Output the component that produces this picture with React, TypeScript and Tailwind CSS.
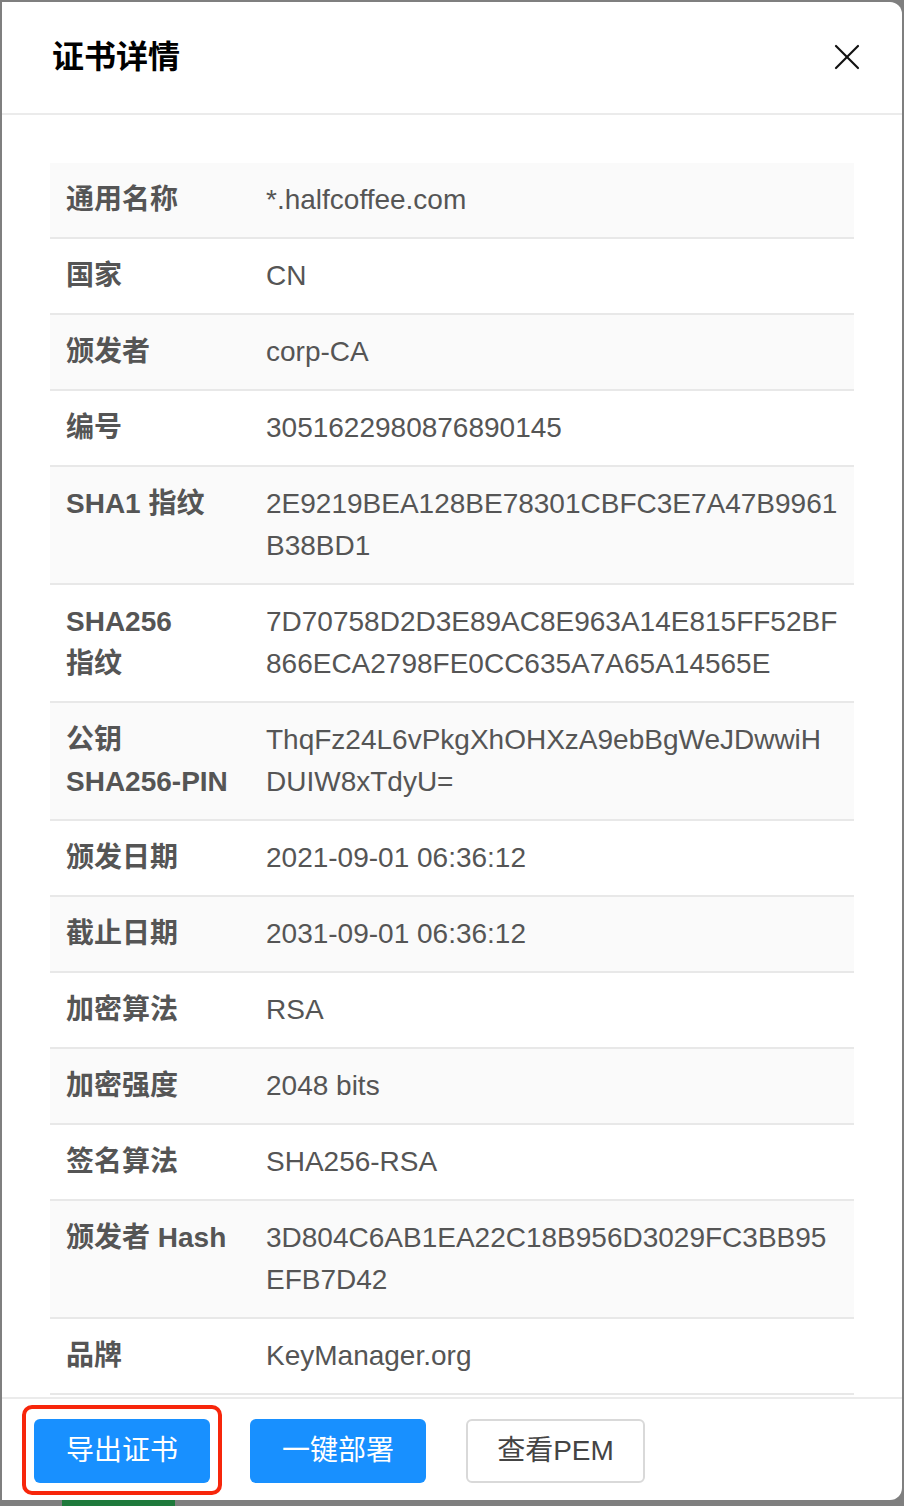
const rows: { label: string[]; value: string[] }[] = [
  { label: ["通用名称"], value: ["*.halfcoffee.com"] },
  { label: ["国家"], value: ["CN"] },
  { label: ["颁发者"], value: ["corp-CA"] },
  { label: ["编号"], value: ["3051622980876890145"] },
  { label: ["SHA1 指纹"], value: ["2E9219BEA128BE78301CBFC3E7A47B9961", "B38BD1"] },
  { label: ["SHA256", "指纹"], value: ["7D70758D2D3E89AC8E963A14E815FF52BF", "866ECA2798FE0CC635A7A65A14565E"] },
  { label: ["公钥", "SHA256-PIN"], value: ["ThqFz24L6vPkgXhOHXzA9ebBgWeJDwwiH", "DUIW8xTdyU="] },
  { label: ["颁发日期"], value: ["2021-09-01 06:36:12"] },
  { label: ["截止日期"], value: ["2031-09-01 06:36:12"] },
  { label: ["加密算法"], value: ["RSA"] },
  { label: ["加密强度"], value: ["2048 bits"] },
  { label: ["签名算法"], value: ["SHA256-RSA"] },
  { label: ["颁发者 Hash"], value: ["3D804C6AB1EA22C18B956D3029FC3BB95", "EFB7D42"] },
  { label: ["品牌"], value: ["KeyManager.org"] },
];

function CloseIcon() {
  return (
    <svg width="26" height="26" viewBox="0 0 26 26" fill="none" stroke="#111" strokeWidth="2.2" strokeLinecap="round">
      <path d="M2 2 L24 24" />
      <path d="M24 2 L2 24" />
    </svg>
  );
}

export default function App() {
  return (
    <div
      className="flex h-[1506px] w-[904px] flex-col overflow-hidden bg-[#7f7f7f] pl-[2px] pt-[2px]"
      style={{ fontFamily: '"Liberation Sans", "Noto Sans CJK SC", sans-serif' }}
    >
      <div className="flex h-[1498px] w-[900px] flex-col overflow-hidden rounded-r-[12px] bg-white">
        <div className="flex h-[113px] shrink-0 items-center justify-between border-b-2 border-[#ebebeb] pb-[2px] pl-[50px] pr-[42px]">
          <h1 className="text-[32px] font-bold text-black">证书详情</h1>
          <CloseIcon />
        </div>
        <div className="flex-1 overflow-hidden px-[48px] pt-[48px]">
          <div className="flex flex-col">
            {rows.map((row, idx) => (
              <div
                key={idx}
                className={`flex border-b-2 border-[#e8e8e8] text-[28px] leading-[42px] text-[#555] ${idx % 2 === 0 ? "bg-[#fafafa]" : "bg-white"}`}
              >
                <div className="w-[200px] shrink-0 whitespace-nowrap px-[16px] py-[16px] font-bold">
                  {row.label.map((l, i) => (
                    <div key={i}>{l}</div>
                  ))}
                </div>
                <div className="flex-1 whitespace-nowrap px-[16px] py-[16px]">
                  {row.value.map((v, i) => (
                    <div key={i}>{v}</div>
                  ))}
                </div>
              </div>
            ))}
          </div>
        </div>
        <div className="flex h-[103px] shrink-0 items-start gap-[40px] border-t-2 border-[#ebebeb] pl-[32px] pt-[20px]">
          <div className="relative">
            <div className="absolute -left-[12px] -top-[14px] h-[90px] w-[200px] rounded-[10px] border-[4px] border-[#f7260b]" />
            <button className="h-[64px] w-[176px] rounded-[6px] bg-[#1890ff] text-[28px] text-white">导出证书</button>
          </div>
          <button className="h-[64px] w-[176px] rounded-[6px] bg-[#1890ff] text-[28px] text-white">一键部署</button>
          <button className="h-[64px] w-[179px] rounded-[6px] border-2 border-[#d9d9d9] bg-white text-[28px] text-[#444]">
            查看PEM
          </button>
        </div>
      </div>
      <div className="flex h-[6px] shrink-0">
        <div className="ml-[60px] h-full w-[113px] bg-[#1f7a3c]" />
      </div>
    </div>
  );
}
